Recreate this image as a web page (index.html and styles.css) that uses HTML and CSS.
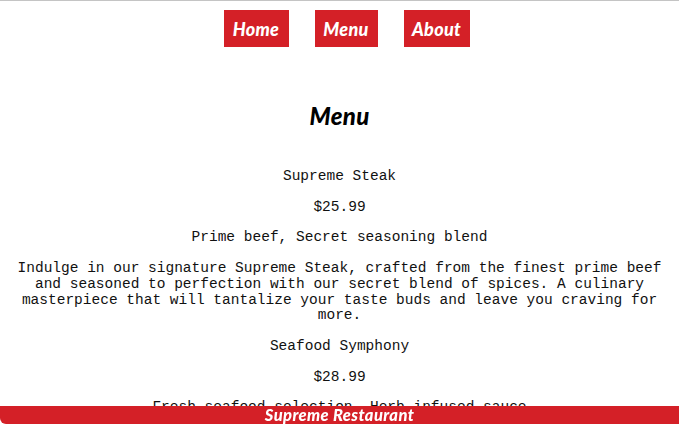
FILE: index.html
```html
<!DOCTYPE html>
<html lang="en">
<head>
<meta charset="utf-8">
<title>Supreme Restaurant - Menu</title>
<link rel="stylesheet" href="styles.css">
</head>
<body>
<header class="topbar">
  <nav class="nav">
    <a class="nav-link nav-home" href="#">Home</a>
    <a class="nav-link nav-menu" href="#">Menu</a>
    <a class="nav-link nav-about" href="#">About</a>
  </nav>
</header>
<main class="menu">
  <h2 class="menu-title">Menu</h2>
  <section class="dish">
    <p>Supreme Steak</p>
    <p>$25.99</p>
    <p>Prime beef, Secret seasoning blend</p>
    <p>Indulge in our signature Supreme Steak, crafted from the finest prime beef and seasoned to perfection with our secret blend of spices. A culinary masterpiece that will tantalize your taste buds and leave you craving for more.</p>
  </section>
  <section class="dish">
    <p>Seafood Symphony</p>
    <p>$28.99</p>
    <p>Fresh seafood selection, Herb-infused sauce</p>
    <p>Dive into a symphony of flavors with our Seafood Symphony, featuring a fresh selection of the ocean's finest, bathed in a delicate herb-infused sauce.</p>
  </section>
</main>
<footer class="footer">Supreme Restaurant</footer>
</body>
</html>
```
FILE: styles.css
```css
html, body {
  margin: 0;
  padding: 0;
  background: #ffffff;
}
body {
  border-top: 1px solid #c4c4c4;
  padding: 0 8px 40px;
}
.nav {
  display: flex;
  justify-content: center;
  gap: 26px;
  padding: 9px 0 0 14px;
}
.nav-link {
  display: flex;
  align-items: center;
  justify-content: center;
  height: 37px;
  background: #d42027;
  color: #ffffff;
  text-decoration: none;
  font-family: "Lato", "Open Sans", sans-serif;
  font-weight: 900;
  font-style: italic;
  font-size: 18px;
  letter-spacing: 0.3px;
}
.nav-home { width: 65px; }
.nav-menu { width: 63px; }
.nav-about { width: 66px; }
.menu-title {
  margin: 55px 0 39px;
  text-align: center;
  font-family: "Lato", "Open Sans", sans-serif;
  font-weight: 900;
  font-style: italic;
  font-size: 24px;
  line-height: 28px;
  letter-spacing: 0.3px;
  color: #000;
}
.dish p {
  margin: 15px 0;
  text-align: center;
  font-family: "Liberation Mono", "Courier New", monospace;
  font-size: 14.5px;
  line-height: 15.7px;
  color: #111;
}
.footer {
  position: fixed;
  left: 0;
  right: 0;
  bottom: 1px;
  height: 18px;
  background: #d42027;
  border-bottom-left-radius: 6px;
  color: #ffffff;
  text-align: center;
  font-family: "Lato", "Open Sans", sans-serif;
  font-weight: 900;
  font-style: italic;
  font-size: 16.5px;
  line-height: 18px;
  letter-spacing: 0.4px;
}
```
